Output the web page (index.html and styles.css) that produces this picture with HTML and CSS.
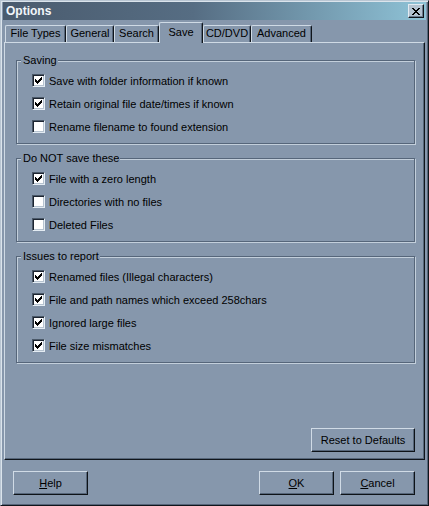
FILE: index.html
```html
<!DOCTYPE html>
<html lang="en">
<head>
  <meta charset="UTF-8" />
  <title>Options</title>
  <link rel="stylesheet" href="styles.css">
</head>
<body>
  <div class="window">
    <div class="titlebar">
      <span class="title">Options</span>
      <button class="close">
        <svg width="8" height="7" viewBox="0 0 8 7" shape-rendering="crispEdges"><path d="M0 0h2v1H0z M6 0h2v1H6z M1 1h2v1H1z M5 1h2v1H5z M2 2h4v1H2z M3 3h2v1H3z M2 4h4v1H2z M1 5h2v1H1z M5 5h2v1H5z M0 6h2v1H0z M6 6h2v1H6z" fill="#000"/></svg>
      </button>
    </div>

    <div class="tabs">
      <div class="tab tab-types">File Types</div>
      <div class="tab tab-general">General</div>
      <div class="tab tab-search">Search</div>
      <div class="tab tab-save active">Save</div>
      <div class="tab tab-cd">CD/DVD</div>
      <div class="tab tab-adv">Advanced</div>
    </div>

    <div class="panel" id="panel"></div>

    <div class="footer">
      <button class="btn"><u>H</u>elp</button>
      <span class="spacer"></span>
      <button class="btn"><u>O</u>K</button>
      <button class="btn"><u>C</u>ancel</button>
    </div>
  </div>

  <script>
    const groups = [
      { title: "Saving", items: [
        { text: "Save with folder information if known", on: true },
        { text: "Retain original file date/times if known", on: true },
        { text: "Rename filename to found extension", on: false },
      ]},
      { title: "Do NOT save these", items: [
        { text: "File with a zero length", on: true },
        { text: "Directories with no files", on: false },
        { text: "Deleted Files", on: false },
      ]},
      { title: "Issues to report", items: [
        { text: "Renamed files (Illegal characters)", on: true },
        { text: "File and path names which exceed 258chars", on: true },
        { text: "Ignored large files", on: true },
        { text: "File size mismatches", on: true },
      ]},
    ];

    const tick = `<svg width="11" height="11" viewBox="0 0 11 11" shape-rendering="crispEdges"><path d="M2 4h1v3H2z M3 5h1v3H3z M4 6h1v3H4z M5 5h1v3H5z M6 4h1v3H6z M7 3h1v3H7z M8 2h1v3H8z" fill="#000"/></svg>`;

    function renderPanel() {
      const panel = document.getElementById("panel");
      groups.forEach(g => {
        const set = document.createElement("fieldset");
        set.className = "group";
        let html = `<legend>${g.title}</legend>`;
        g.items.forEach(it => {
          html += `
            <div class="row">
              <span class="box">${it.on ? tick : ""}</span>
              <span>${it.text}</span>
            </div>`;
        });
        set.innerHTML = html;
        panel.appendChild(set);
      });
      const reset = document.createElement("button");
      reset.className = "btn reset";
      reset.textContent = "Reset to Defaults";
      panel.appendChild(reset);
    }

    renderPanel();
  </script>
</body>
</html>
```

FILE: styles.css
```css
body {
  margin: 0;
  font-family: "Liberation Sans", Arial, sans-serif;
  font-size: 11px;
  color: #000;
  background: #8697ac;
}
.window {
  width: 429px;
  height: 506px;
  box-sizing: border-box;
  padding: 1px;
  border: 1px solid;
  border-color: #b9c6d3 #10151b #10151b #b9c6d3;
  box-shadow: inset 1px 1px #dbe4ec, inset -1px -1px #56657a;
  display: flex;
  flex-direction: column;
}
.titlebar {
  height: 18px;
  margin: 0 1px;
  padding: 0 2px 0 3px;
  display: flex;
  align-items: center;
  justify-content: space-between;
  background: linear-gradient(to right, #4a5b6e, #566d83 45%, #8fc3d7);
}
.title {
  color: #f2f6fa;
  font-weight: bold;
  font-size: 12px;
}
.close {
  width: 16px;
  height: 14px;
  padding: 0;
  background: #b3c2d0;
  border: 1px solid;
  border-color: #e2eaf1 #10151b #10151b #e2eaf1;
  box-shadow: inset -1px -1px #6b7b8e;
  display: flex;
  align-items: center;
  justify-content: center;
}
.tabs {
  display: flex;
  align-items: flex-end;
  height: 20px;
  margin: 2px 0 0 3px;
}
.tab {
  height: 17px;
  box-sizing: border-box;
  padding: 0;
  text-align: center;
  line-height: 15px;
  border-top: 1px solid #cfdae5;
  border-left: 1px solid #cfdae5;
  border-right: 1px solid #10151b;
  box-shadow: inset -1px 0 #56667a;
  border-radius: 2px 2px 0 0;
}
.tab-types { width: 61px; }
.tab-general { width: 48px; }
.tab-search { width: 45px; }
.tab-save { width: 44px; }
.tab-cd { width: 48px; }
.tab-adv { width: 61px; }
.tab.active {
  position: relative;
  z-index: 1;
  height: 21px;
  margin-bottom: -1px;
  line-height: 18px;
  background: #8697ac;
}
.panel {
  height: 418px;
  box-sizing: border-box;
  margin: 0 2px;
  padding: 11px 9px 7px 11px;
  border: 1px solid;
  border-color: #cfdae5 #10151b #10151b #cfdae5;
  box-shadow: inset -1px -1px #56667a;
  display: flex;
  flex-direction: column;
}
.group {
  margin: 0 0 8px;
  padding: 2px 4px 5px;
  min-width: 0;
  border: 1px solid #56667a;
  box-shadow: inset 1px 1px #c3cfdb, 1px 1px #c3cfdb;
}
.group legend {
  padding: 0 1px 0 2px;
  line-height: 13px;
  background: #8697ac;
}
.row {
  display: flex;
  align-items: center;
  gap: 4px;
  height: 23px;
  margin-left: 11px;
}
.box {
  width: 13px;
  height: 13px;
  box-sizing: border-box;
  background: #fff;
  border: 1px solid;
  border-color: #4a5868 #e4ecf3 #e4ecf3 #4a5868;
  box-shadow: inset 1px 1px #1c2430, inset -1px -1px #b6c3d0;
  display: flex;
}
.btn {
  width: 75px;
  height: 24px;
  padding: 0;
  font-family: inherit;
  font-size: 11px;
  color: #000;
  background: #8697ac;
  border: 1px solid;
  border-color: #d0dbe6 #0e1318 #0e1318 #d0dbe6;
  box-shadow: inset -1px -1px #56667a;
}
.btn.reset {
  width: 104px;
  margin-top: auto;
  align-self: flex-end;
}
.footer {
  display: flex;
  gap: 6px;
  margin-top: 11px;
  padding: 0 12px 0 11px;
}
.spacer {
  flex: 1;
}
```
